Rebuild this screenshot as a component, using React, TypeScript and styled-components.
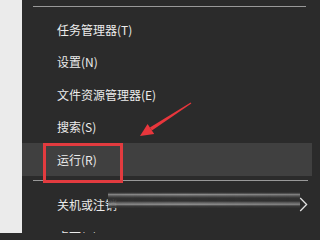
import React from 'react'
import styled, { createGlobalStyle } from 'styled-components'

const GlobalStyle = createGlobalStyle`
  html, body {
    margin: 0;
    padding: 0;
    background: #2b2b2b;
  }
  body {
    font-family: "Noto Sans CJK SC", "Noto Sans", sans-serif;
  }
`

interface MenuEntry {
  label: string
  active?: boolean
  marked?: boolean
  submenu?: boolean
  smeared?: boolean
}

const topItems: MenuEntry[] = [
  { label: '任务管理器(T)' },
  { label: '设置(N)' },
  { label: '文件资源管理器(E)' },
  { label: '搜索(S)' },
  { label: '运行(R)', active: true, marked: true },
]

const bottomItems: MenuEntry[] = [
  { label: '关机或注销', submenu: true, smeared: true },
  { label: '桌面(D)' },
]

const App: React.FC = () => {
  const renderItem = (item: MenuEntry) => (
    <Item key={item.label} $active={item.active}>
      <span>{item.label}</span>
      {item.submenu && (
        <Chevron viewBox="0 0 9 15" width="9" height="15">
          <polyline points="1.2,1 7.6,7.5 1.2,14" fill="none" stroke="#e2e2e2" strokeWidth="1.3" />
        </Chevron>
      )}
      {item.marked && <RedFrame />}
      {item.smeared && <Smear />}
    </Item>
  )

  return (
    <Page>
      <GlobalStyle />
      <LeftStrip />
      <Menu>
        <Divider $top={6} $bottom={6} $right={6} />
        {topItems.map(renderItem)}
        <Divider $top={4} $bottom={7.25} $right={4} />
        {bottomItems.map(renderItem)}
      </Menu>
      <Annotation viewBox="0 0 312 233" width="312" height="233">
        <polygon points="191.3,103.5 190.7,102.5 149.9,127.4 151.9,130.4" fill="#e8363c" />
        <polygon points="140,136 154.2,133.9 147.6,123.9" fill="#e8363c" />
      </Annotation>
    </Page>
  )
}

const Page = styled.div`
  position: relative;
  display: flex;
  width: 312px;
  height: 233px;
  overflow: hidden;
`

const LeftStrip = styled.div`
  flex: none;
  width: 22px;
  background: #ebebeb;
`

const Menu = styled.div`
  flex: 1;
  display: flex;
  flex-direction: column;
  background: #2b2b2b;
`

const Divider = styled.div<{ $top: number; $bottom: number; $right: number }>`
  flex: none;
  height: 1px;
  background: #999999;
  margin: ${(props) => props.$top}px ${(props) => props.$right}px ${(props) => props.$bottom}px 11px;
`

const Item = styled.div<{ $active?: boolean }>`
  position: relative;
  flex: none;
  height: 32.5px;
  display: flex;
  align-items: center;
  justify-content: space-between;
  padding: 0 4px 0 35px;
  font-size: 12px;
  color: #ececec;
  background: ${(props) => (props.$active ? '#404040' : 'transparent')};
`

const Chevron = styled.svg`
  display: block;
  position: relative;
  z-index: 2;
`

const RedFrame = styled.div`
  position: absolute;
  left: 21px;
  top: 0;
  width: 80px;
  height: 40px;
  box-sizing: border-box;
  border: 3px solid #e23b3f;
  z-index: 1;
`

const Smear = styled.div`
  position: absolute;
  left: 86px;
  top: 4px;
  width: 192px;
  height: 16px;
  background: linear-gradient(
    to bottom,
    #2e2e2e 0px,
    #3a3a3a 1px,
    #8c8c8c 2.5px,
    #5a5a5a 4px,
    #333333 6px,
    #303030 9px,
    #6e6e6e 11px,
    #8a8a8a 12.5px,
    #3c3c3c 14px,
    #2e2e2e 16px
  );
  -webkit-mask-image: linear-gradient(to right, rgba(0, 0, 0, 0.9), #000 40%, rgba(0, 0, 0, 0.85));
  mask-image: linear-gradient(to right, rgba(0, 0, 0, 0.9), #000 40%, rgba(0, 0, 0, 0.85));
`

const Annotation = styled.svg`
  position: absolute;
  left: 0;
  top: 0;
  pointer-events: none;
`

export default App
